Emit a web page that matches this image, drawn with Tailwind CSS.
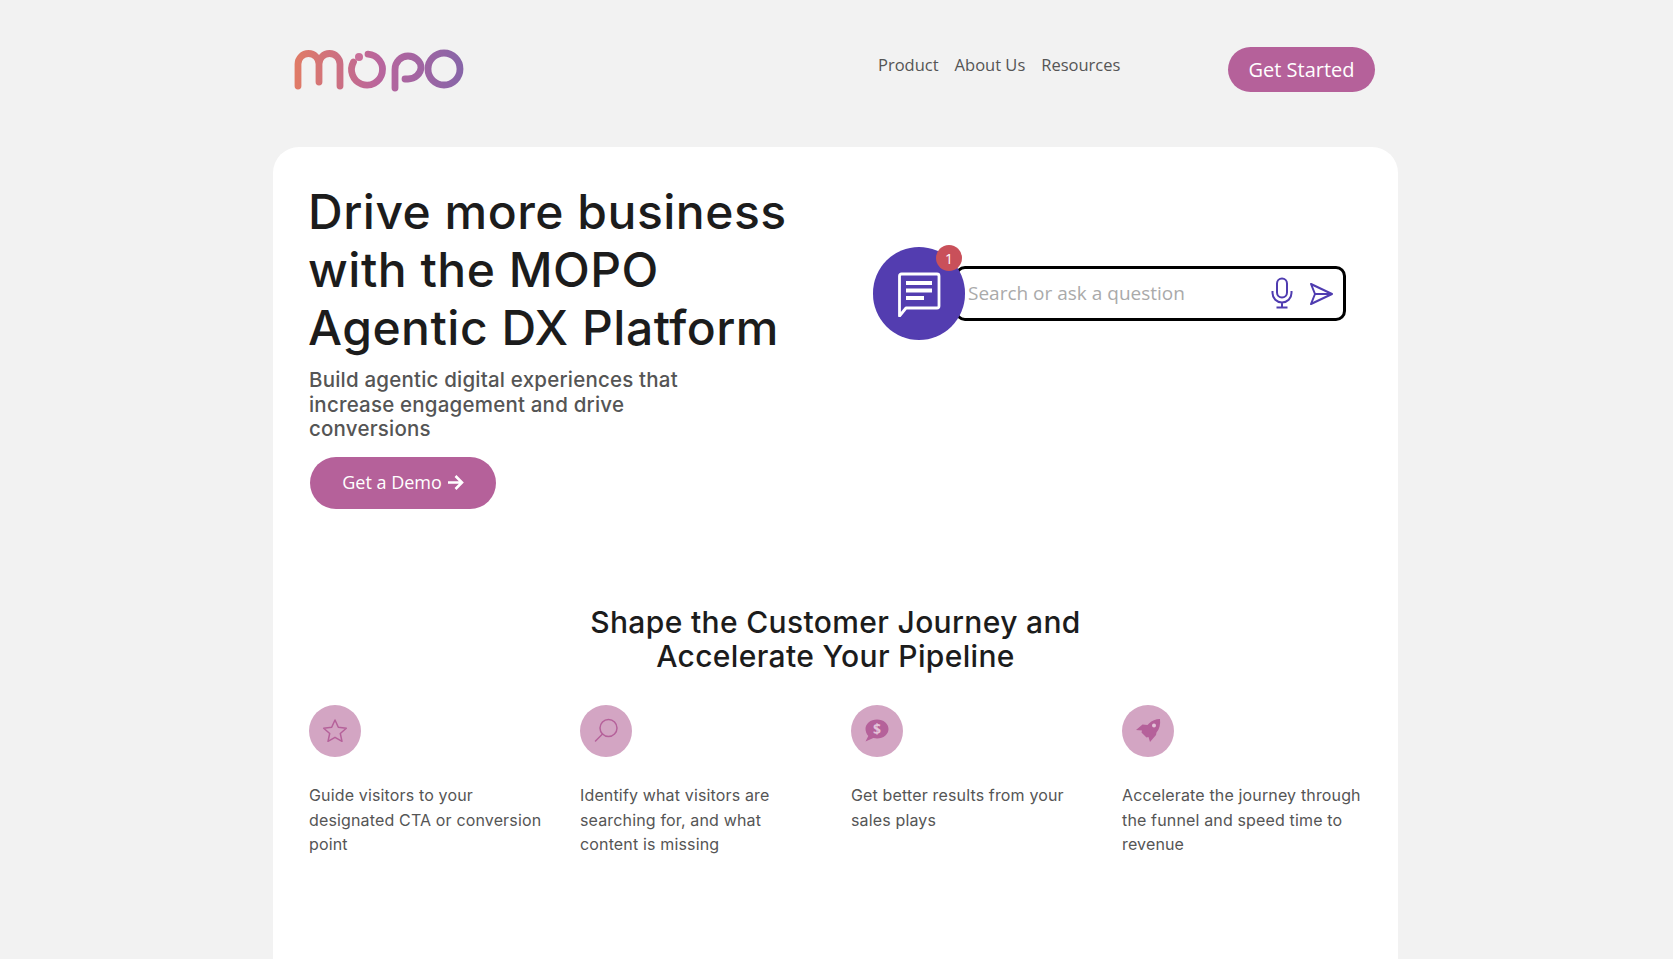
<!DOCTYPE html>
<html lang="en">
<head>
  <meta charset="UTF-8" />
  <title>MOPO</title>
  <script src="https://cdn.jsdelivr.net/npm/@tailwindcss/browser@4"></script>
</head>
<body class="bg-[#f2f2f2] font-['Open_Sans',sans-serif] h-[959px] overflow-hidden">

  <!-- header -->
  <header class="ml-[290px] w-[1085px] h-[147px] flex items-start">
    <svg class="mt-[45px] w-[180px] h-[52px]" viewBox="0 0 180 52" fill="none" stroke="url(#logoGrad)" stroke-width="6.800" stroke-linecap="round">
      <defs>
        <linearGradient id="logoGrad" gradientUnits="userSpaceOnUse" x1="5" y1="0" x2="175" y2="0">
          <stop offset="0" stop-color="#e07b66" />
          <stop offset="0.5" stop-color="#b9659d" />
          <stop offset="1" stop-color="#8665a8" />
        </linearGradient>
      </defs>
      <path d="M8 41V19a10.500 10.500 0 0 1 21 0v18M29 19a10.500 10.500 0 0 1 21 0v22" />
      <path d="M78 9.100A15.500 15.500 0 1 1 63.500 17" />
      <circle cx="69" cy="12" r="4" fill="#c9709a" stroke="none" />
      <path d="M105 43V24.500C105 17 111 11 118 11s13 5.500 13 11.500-6 11.500-13 11.500h-3" />
      <circle cx="154" cy="24" r="16" />
    </svg>
    <nav class="ml-[408px] mt-[54px] flex gap-[16px] text-[16.500px] leading-[22px] text-[#555]">
      <a>Product</a>
      <a>About Us</a>
      <a>Resources</a>
    </nav>
    <a class="ml-auto mt-[47px] w-[147px] h-[45px] rounded-full bg-[#b5619a] text-white text-[20px] flex items-center justify-center">Get Started</a>
  </header>

  <!-- main card -->
  <main class="ml-[273px] w-[1125px] h-[812px] bg-white rounded-t-[26px] px-[36px] pt-[36px]">
    <section class="flex h-[422px]">
      <div class="w-[545px] shrink-0">
        <h1 class="ml-[-1px] font-['Inter',sans-serif] font-medium text-[48px] tracking-[0.5px] leading-[58px] text-[#1c1c1c]">Drive more business<br />with the MOPO<br />Agentic DX Platform</h1>
        <p class="mt-[11px] w-[400px] font-['Inter',sans-serif] font-medium text-[20.500px] tracking-[0.2px] leading-[24.500px] text-[#555]">Build agentic digital experiences that increase engagement and drive conversions</p>
        <a class="mt-[15px] ml-[1px] w-[186px] h-[52px] rounded-full bg-[#b5619a] text-white text-[18px] flex items-center justify-center gap-[5px]">
          Get a Demo
          <svg class="w-[17px] h-[17px]" viewBox="0 0 17 17" fill="none" stroke="currentColor" stroke-width="2.600"><path d="M1 8.500h14M8.500 2l6.500 6.500-6.500 6.500" /></svg>
        </a>
      </div>

      <div class="ml-[19px] mt-[64px] relative h-[93px] w-[480px]">
        <div class="absolute left-[82px] top-[19px] w-[391px] h-[55px] rounded-[10px] border-[3px] border-black flex items-center pl-[10px] pb-[1px] text-[19px] text-[#aaa]">
          Search or ask a question
          <svg class="absolute left-[310px] top-[8px] w-[28px] h-[32px]" viewBox="0 0 28 32" fill="none" stroke="#4f3cb0" stroke-width="2"><rect x="9" y="1.500" width="10" height="19" rx="5" /><path d="M4.500 14v2a9.500 9.500 0 0 0 19 0v-2M14 25.500V30M8.500 30.500h11" /></svg>
          <svg class="absolute left-[350px] top-[12px] w-[26px] h-[26px]" viewBox="0 0 26 26" fill="none" stroke="#4f3cb0" stroke-width="2" stroke-linejoin="round"><path d="M3 3l21 10-21 10 4-10zM7 13h17" /></svg>
        </div>
        <div class="absolute left-0 top-0 w-[92px] h-[93px] rounded-full bg-[#533db0] flex items-center justify-center">
          <svg class="w-[46px] h-[46px]" viewBox="0 0 46 46" fill="none" stroke="#fff"><path d="M6 3h35a2 2 0 0 1 2 2v30a2 2 0 0 1-2 2H10L3.500 45V5a2 2 0 0 1 2-2z" stroke-width="2.800" stroke-linejoin="round" /><path d="M10 12h26M10 19.500h26M10 27h18" stroke-width="4" /></svg>
        </div>
        <span class="absolute left-[63px] top-[-2px] w-[26px] h-[26px] rounded-full bg-[#c9505a] text-white text-[14px] flex items-center justify-center">1</span>
      </div>
    </section>

    <h2 class="font-['Inter',sans-serif] font-medium text-[30px] tracking-[0.35px] leading-[34px] text-[#1c1c1c] text-center">Shape the Customer Journey and<br />Accelerate Your Pipeline</h2>

    <section class="mt-[32px] grid grid-cols-4 gap-x-[31px] w-[1053px] font-['Inter',sans-serif] text-[16px] tracking-[0.15px] leading-[24.500px] text-[#555]">
      <div>
        <div class="w-[52px] h-[52px] rounded-full bg-[#d3a5c3] flex items-center justify-center">
          <svg class="w-[26px] h-[26px]" viewBox="0 0 26 26" fill="none" stroke="#b5619a" stroke-width="1.500" stroke-linejoin="round"><path d="M13 2l3.300 7.300 8 .9-6 5.300 1.700 7.800-7-4-7 4 1.700-7.800-6-5.300 8-.9z" /></svg>
        </div>
        <p class="mt-[26px]">Guide visitors to your designated CTA or conversion point</p>
      </div>
      <div>
        <div class="w-[52px] h-[52px] rounded-full bg-[#d3a5c3] flex items-center justify-center">
          <svg class="w-[26px] h-[26px]" viewBox="0 0 26 26" fill="none" stroke="#b5619a" stroke-width="1.500" stroke-linecap="round"><circle cx="15.500" cy="10" r="8.500" /><path d="M9.500 16L2.500 23" /></svg>
        </div>
        <p class="mt-[26px]">Identify what visitors are searching for, and what content is missing</p>
      </div>
      <div>
        <div class="w-[52px] h-[52px] rounded-full bg-[#d3a5c3] flex items-center justify-center">
          <svg class="w-[26px] h-[26px]" viewBox="0 0 26 26"><path d="M13 1.500c6.500 0 11.500 4.200 11.500 9.500S19.500 20.500 13 20.500c-1.300 0-2.500-.2-3.700-.5L1.500 23.500l2.800-5.500C2.600 16 1.500 13.500 1.500 11 1.500 5.700 6.500 1.500 13 1.500z" fill="#b5619a" /><text x="13" y="16" text-anchor="middle" font-family="Open Sans" font-size="14" font-weight="700" fill="#e4c3d9">$</text></svg>
        </div>
        <p class="mt-[26px]">Get better results from your sales plays</p>
      </div>
      <div>
        <div class="w-[52px] h-[52px] rounded-full bg-[#d3a5c3] flex items-center justify-center">
          <svg class="w-[26px] h-[26px]" viewBox="0 0 26 26"><path d="M25 1c.6 5.500-.5 10-3.500 13.500L21 17l-6 7-1.500-5-2 .5-5-5 .5-2-6-.5L7.500 6.500l5 .5 1.500-1.500C17 2.500 20.500 1 25 1z" fill="#b5619a" /><circle cx="19" cy="7.500" r="2" fill="#e4c3d9" /></svg>
        </div>
        <p class="mt-[26px]">Accelerate the journey through the funnel and speed time to revenue</p>
      </div>
    </section>
  </main>

</body>
</html>
